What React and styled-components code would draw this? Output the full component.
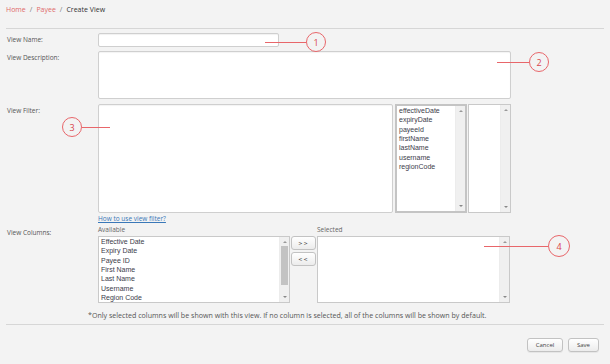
import React from 'react'
import styled, { createGlobalStyle } from 'styled-components'

const Global = createGlobalStyle`
  html, body { margin: 0; padding: 0; background: #f3f3f3; }
  body { font-family: "Open Sans", "Liberation Sans", sans-serif; color: #555; font-size: 7px; }
  * { box-sizing: border-box; }
`

const Page = styled.div`
  position: relative;
  width: 610px;
  height: 364px;
  overflow: hidden;
  background: #f3f3f3;
`
const Crumbs = styled.div`
  padding: 4px 0 12px 6px;
  line-height: 12px;
  font-size: 7px;
  color: #444;
`
const Crumb = styled.span`
  color: ${p => (p.$link ? '#e06a6a' : '#333')};
`
const Sep = styled.span`
  color: #777;
  margin: 0 4px;
`
const Rule = styled.div`
  margin: ${p => p.$top || 0}px 6px 0 6px;
  border-top: 1px solid #d6d6d6;
`
const Row = styled.div`
  display: grid;
  grid-template-columns: 98px 1fr;
  margin-top: ${p => p.$top || 0}px;
`
const Label = styled.div`
  padding: ${p => p.$pad || 2}px 0 0 7px;
  font-size: 6.5px;
  line-height: 10px;
  color: #555;
`
const TextInput = styled.input`
  display: block;
  width: 181px;
  height: 14px;
  border: 1px solid #cfcfcf;
  border-radius: 2px;
  background: #fff;
  box-shadow: inset 0 1px 1px rgba(0,0,0,0.06);
  padding: 0 3px;
  outline: none;
`
const TextArea = styled.textarea`
  display: block;
  width: ${p => p.$w}px;
  height: ${p => p.$h}px;
  border: 1px solid #cfcfcf;
  border-radius: 2px;
  background: #fff;
  resize: none;
  outline: none;
  box-shadow: inset 0 1px 1px rgba(0,0,0,0.05);
`
const FilterWrap = styled.div`
  display: flex;
  gap: 2px;
  height: 109px;
`
const ListBox = styled.div`
  display: flex;
  width: ${p => p.$w}px;
  height: ${p => p.$h}px;
  margin-left: ${p => p.$ml || 0}px;
  background: #fff;
  border: ${p => (p.$thick ? '2px solid #c4c4c4' : '1px solid #c9c9c9')};
`
const Items = styled.ul`
  flex: 1;
  margin: 0;
  padding: 0 0 0 2px;
  list-style: none;
  font-family: "Liberation Sans", Arial, sans-serif;
  font-size: 7px;
  line-height: 9.33px;
  color: #3c3c4a;
`
const Scroll = styled.div`
  position: relative;
  width: 10px;
  background: #f0f0f0;
  border-left: 1px solid #ececec;
`
const Arrow = styled.span`
  position: absolute;
  left: 3px;
  ${p => (p.$down ? 'bottom: 4px;' : 'top: 4px;')}
  width: 0;
  height: 0;
  border-left: 2px solid transparent;
  border-right: 2px solid transparent;
  ${p => (p.$down ? 'border-top: 2px solid #888;' : 'border-bottom: 2px solid #999;')}
`
const Thumb = styled.div`
  position: absolute;
  left: 1px;
  right: 1px;
  top: 9px;
  height: 39px;
  background: #c3c3c3;
`
const HelpLink = styled.a`
  display: block;
  font-size: 6.5px;
  line-height: 10px;
  color: #3a78b8;
  text-decoration: underline;
  padding-top: 1px;
`
const Columns = styled.div`
  display: flex;
  gap: 1px;
`
const Col = styled.div`
  display: flex;
  flex-direction: column;
`
const ColHead = styled.div`
  font-size: 6.5px;
  line-height: 10px;
  height: 11px;
  color: #666;
`
const MoveBtns = styled.div`
  display: flex;
  flex-direction: column;
  gap: 2px;
  padding-top: 11px;
`
const SmallBtn = styled.button`
  display: block;
  width: ${p => p.$w || 25}px;
  height: 14px;
  padding: 0;
  border: 1px solid #c2c2c2;
  border-radius: 3px;
  background: linear-gradient(#ffffff, #ececec);
  font-family: ${p => (p.$mono ? '"DejaVu Sans", sans-serif' : '"Open Sans", "Liberation Sans", sans-serif')};
  font-size: ${p => p.$fs || 6}px;
  line-height: 12px;
  color: #444;
  letter-spacing: ${p => p.$ls || 0}px;
`
const Note = styled.div`
  margin: 7px 0 0 88px;
  font-size: 7.1px;
  line-height: 10px;
  color: #555;
  white-space: nowrap;
`
const Footer = styled.div`
  display: flex;
  justify-content: flex-end;
  gap: 5px;
  padding: 13px 11px 0 0;
`
const ActionBtn = styled(SmallBtn)`
  box-shadow: 0 1px 0 rgba(0,0,0,0.05);
`
const CalloutLine = styled.div`
  position: absolute;
  height: 1px;
  background: #e8666a;
`
const CalloutCircle = styled.div`
  position: absolute;
  display: flex;
  align-items: center;
  justify-content: center;
  border: 1px solid #e8666a;
  border-radius: 50%;
  font-size: 9px;
  color: #d9454b;
  font-family: "Open Sans", "Liberation Sans", sans-serif;
`

const Callout = ({ n, cx, cy, x1, x2, r = 10 }) => (
  <>
    <CalloutLine style={{ left: x1, top: cy, width: x2 - x1 }} />
    <CalloutCircle style={{ left: cx - r, top: cy - r, width: r * 2, height: r * 2 }}>{n}</CalloutCircle>
  </>
)

const Scrollbar = ({ thumb }) => (
  <Scroll>
    <Arrow />
    {thumb && <Thumb />}
    <Arrow $down />
  </Scroll>
)

const fields = ['effectiveDate', 'expiryDate', 'payeeId', 'firstName', 'lastName', 'username', 'regionCode']
const available = ['Effective Date', 'Expiry Date', 'Payee ID', 'First Name', 'Last Name', 'Username', 'Region Code']

export default function App() {
  return (
    <Page>
      <Global />
      <Crumbs>
        <Crumb $link>Home</Crumb><Sep>/</Sep><Crumb $link>Payee</Crumb><Sep>/</Sep><Crumb>Create View</Crumb>
      </Crumbs>
      <Rule />

      <Row $top={4}>
        <Label>View Name:</Label>
        <div><TextInput /></div>
      </Row>

      <Row $top={4}>
        <Label>View Description:</Label>
        <TextArea $w={413} $h={48} />
      </Row>

      <Row $top={5}>
        <Label>View Filter:</Label>
        <FilterWrap>
          <TextArea $w={295} $h={109} />
          <ListBox $w={72} $h={109} $thick>
            <Items>
              {fields.map(f => <li key={f}>{f}</li>)}
            </Items>
            <Scrollbar />
          </ListBox>
          <ListBox $w={43} $h={109} $ml={-1}>
            <Items />
            <Scrollbar />
          </ListBox>
        </FilterWrap>
      </Row>

      <Row>
        <div />
        <HelpLink>How to use view filter?</HelpLink>
      </Row>

      <Row $top={1}>
        <Label $pad={3}>View Columns:</Label>
        <Columns>
          <Col>
            <ColHead>Available</ColHead>
            <ListBox $w={192} $h={67}>
              <Items>
                {available.map(a => <li key={a}>{a}</li>)}
              </Items>
              <Scrollbar thumb />
            </ListBox>
          </Col>
          <MoveBtns>
            <SmallBtn $mono $fs={5} $ls={1}>&gt;&gt;</SmallBtn>
            <SmallBtn $mono $fs={5} $ls={1}>&lt;&lt;</SmallBtn>
          </MoveBtns>
          <Col>
            <ColHead>Selected</ColHead>
            <ListBox $w={193} $h={67}>
              <Items />
              <Scrollbar />
            </ListBox>
          </Col>
        </Columns>
      </Row>

      <Note>*Only selected columns will be shown with this view. If no column is selected, all of the columns will be shown by default.</Note>
      <Rule $top={4} />

      <Footer>
        <ActionBtn $w={36}>Cancel</ActionBtn>
        <ActionBtn $w={31}>Save</ActionBtn>
      </Footer>

      <Callout n="1" cx={316} cy={42} x1={265} x2={306} />
      <Callout n="2" cx={539} cy={62} x1={497} x2={529} />
      <Callout n="3" cx={72} cy={127} x1={82} x2={110} />
      <Callout n="4" cx={559} cy={246} x1={484} x2={548} r={11} />
    </Page>
  )
}
